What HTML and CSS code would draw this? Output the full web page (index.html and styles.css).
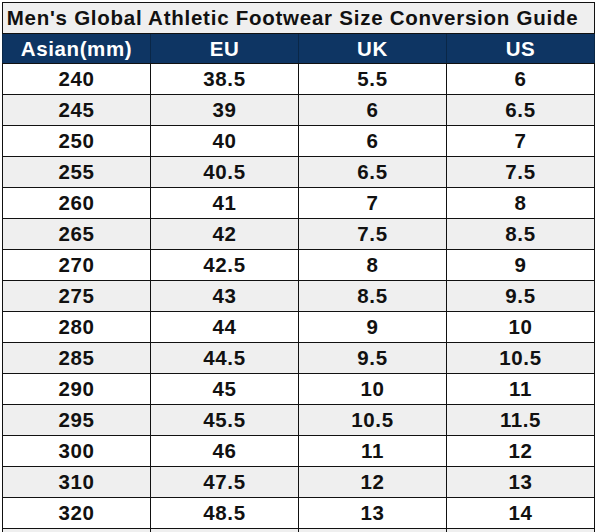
FILE: index.html
```html
<!DOCTYPE html>
<html>
<head>
<meta charset="utf-8">
<link rel="stylesheet" href="styles.css">
</head>
<body>
<table class="size-table">
  <thead>
    <tr class="title-row"><th colspan="4"><span class="title-text">Men's Global Athletic Footwear Size Conversion Guide</span></th></tr>
    <tr class="head-row"><th>Asian(mm)</th><th>EU</th><th>UK</th><th>US</th></tr>
  </thead>
  <tbody>
    <tr><td>240</td><td>38.5</td><td>5.5</td><td>6</td></tr>
    <tr><td>245</td><td>39</td><td>6</td><td>6.5</td></tr>
    <tr><td>250</td><td>40</td><td>6</td><td>7</td></tr>
    <tr><td>255</td><td>40.5</td><td>6.5</td><td>7.5</td></tr>
    <tr><td>260</td><td>41</td><td>7</td><td>8</td></tr>
    <tr><td>265</td><td>42</td><td>7.5</td><td>8.5</td></tr>
    <tr><td>270</td><td>42.5</td><td>8</td><td>9</td></tr>
    <tr><td>275</td><td>43</td><td>8.5</td><td>9.5</td></tr>
    <tr><td>280</td><td>44</td><td>9</td><td>10</td></tr>
    <tr><td>285</td><td>44.5</td><td>9.5</td><td>10.5</td></tr>
    <tr><td>290</td><td>45</td><td>10</td><td>11</td></tr>
    <tr><td>295</td><td>45.5</td><td>10.5</td><td>11.5</td></tr>
    <tr><td>300</td><td>46</td><td>11</td><td>12</td></tr>
    <tr><td>310</td><td>47.5</td><td>12</td><td>13</td></tr>
    <tr><td>320</td><td>48.5</td><td>13</td><td>14</td></tr>
    <tr><td></td><td></td><td></td><td></td></tr>
  </tbody>
</table>
</body>
</html>
```
FILE: styles.css
```css
html, body {
  margin: 0;
  padding: 0;
  background: #ffffff;
  overflow: hidden;
}
body {
  padding: 2px 0 0 2px;
  font-family: "Liberation Sans", Arial, sans-serif;
}
.size-table {
  border-collapse: collapse;
  table-layout: fixed;
  width: 593px;
  font-weight: bold;
  font-size: 20.5px;
  letter-spacing: 0.6px;
  color: #111111;
}
.size-table th,
.size-table td {
  border: 1px solid #111111;
  padding: 0;
  text-align: center;
  width: 148px;
}
.title-row th {
  height: 30px;
  background: #efefef;
  color: #111111;
  padding-right: 12px;
}
.title-text {
  letter-spacing: 0.75px;
}
.head-row th {
  height: 29px;
  background: #0e3563;
  color: #ffffff;
  border-color: #0a2747;
  border-bottom-color: #111111;
  border-top-color: #111111;
}
.size-table td {
  height: 30px;
}
.size-table tbody tr:nth-child(even) td {
  background: #efefef;
}
```
